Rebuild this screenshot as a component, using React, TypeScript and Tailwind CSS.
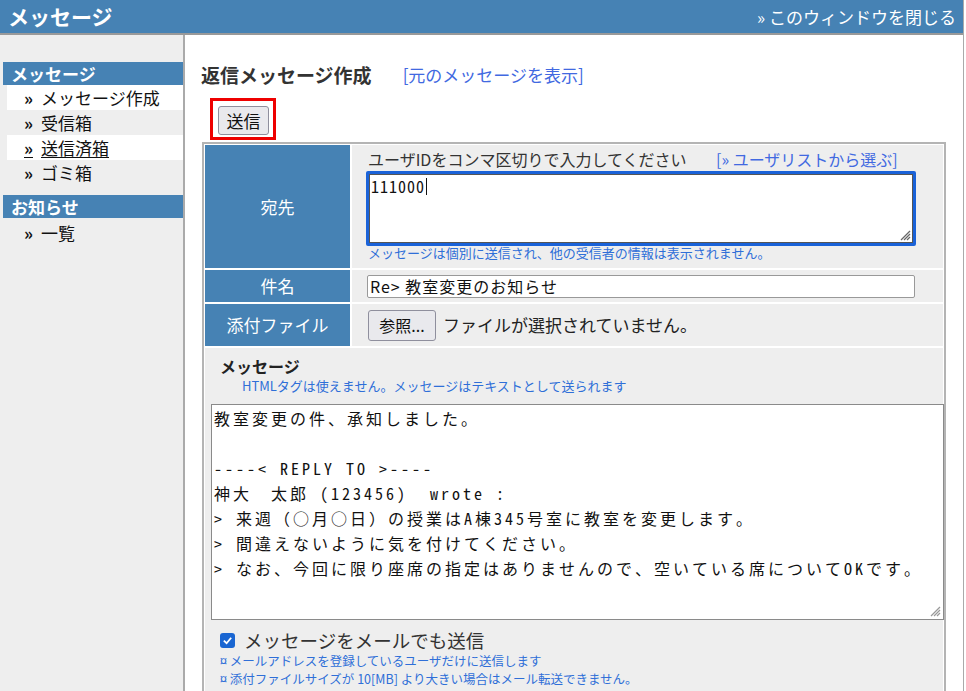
import React from 'react';

const messageLines = [
  '教室変更の件、承知しました。',
  '',
  '----< REPLY TO >----',
  '神大　太郎 (123456)  wrote :',
  '> 来週（○月○日）の授業はA棟345号室に教室を変更します。',
  '> 間違えないように気を付けてください。',
  '> なお、今回に限り座席の指定はありませんので、空いている席についてOKです。',
];

function Grip({ dark }: { dark?: boolean }) {
  return (
    <svg
      className="absolute right-[2px] bottom-[2px]"
      width="12"
      height="12"
      viewBox="0 0 12 12"
    >
      <g stroke={dark ? '#666' : '#999'} strokeWidth="1.2">
        <line x1="11" y1="2" x2="2" y2="11" />
        <line x1="11" y1="5" x2="5" y2="11" />
        <line x1="11" y1="8" x2="8" y2="11" />
      </g>
    </svg>
  );
}

function SideHeader({ children }: { children: React.ReactNode }) {
  return (
    <div className="ml-[3px] h-[23px] bg-[#4682b4] pl-[8px] text-[17px] font-bold leading-[23px] text-white">
      {children}
    </div>
  );
}

function SideItem({
  children,
  active,
  underline,
}: {
  children: React.ReactNode;
  active?: boolean;
  underline?: boolean;
}) {
  return (
    <div
      className={
        'ml-[7px] h-[25px] pl-[17px] text-[17px] leading-[25px] text-[#111] ' +
        (active ? 'bg-white' : '')
      }
    >
      <span className={underline ? 'underline underline-offset-2' : ''}>
        <span className="font-bold">»</span>
        <span className="ml-[8px]">{children}</span>
      </span>
    </div>
  );
}

export default function App() {
  return (
    <div className="h-[691px] w-[966px] overflow-hidden bg-white font-['Noto_Sans_CJK_JP',sans-serif] text-[#222]">
      <div className="flex h-full w-[964px] flex-col border-r border-[#aaa]">
        {/* Header */}
        <header className="flex h-[35px] shrink-0 items-center justify-between border-b-2 border-[#999] bg-[#4682b4] pl-[8px] pr-[7px]">
          <h1 className="text-[21px] font-bold leading-none text-white">メッセージ</h1>
          <span className="text-[17px] leading-none text-white">» このウィンドウを閉じる</span>
        </header>

        <div className="flex min-h-0 flex-1">
          {/* Sidebar */}
          <aside className="w-[185px] shrink-0 border-r-2 border-[#aaa] bg-[#eee] pt-[27px]">
            <SideHeader>メッセージ</SideHeader>
            <SideItem active>メッセージ作成</SideItem>
            <SideItem>受信箱</SideItem>
            <SideItem active underline>
              送信済箱
            </SideItem>
            <SideItem>ゴミ箱</SideItem>
            <div className="h-[10px]" />
            <SideHeader>お知らせ</SideHeader>
            <div className="h-[2px]" />
            <SideItem>一覧</SideItem>
          </aside>

          {/* Main */}
          <main className="flex-1 pl-[16px] pt-[28px]">
            <div className="flex items-center">
              <h2 className="text-[19px] font-bold leading-[24px] text-[#333]">返信メッセージ作成</h2>
              <span className="ml-[31px] text-[17px] leading-[24px] text-[#4169e1]">[元のメッセージを表示]</span>
            </div>

            <div className="ml-[9px] mt-[11px] h-[42px] w-[66px] border-[3px] border-[#ee0000] pl-[5px] pt-[5px]">
              <button className="flex h-[29px] w-[51px] items-center justify-center rounded-[3px] border border-[#8f8f9d] bg-[#e9e9ed] text-[17px] leading-none text-[#111]">
                送信
              </button>
            </div>

            {/* Form table */}
            <div className="ml-[1px] mt-[2px] w-[744px] border-2 border-[#b4b4b4] bg-white p-px">
              <div className="grid grid-cols-[145px_1fr] gap-[2px]">
                {/* 宛先 */}
                <div className="flex h-[123px] items-center justify-center bg-[#4682b4] text-[17px] text-white">宛先</div>
                <div className="bg-[#eee] pl-[14px] pt-[4px]">
                  <div className="flex pl-[2px] text-[16px] leading-[20px] text-[#333]">
                    <span className="w-[348px]">ユーザIDをコンマ区切りで入力してください</span>
                    <span className="text-[#4169e1]">[» ユーザリストから選ぶ]</span>
                  </div>
                  <div className="relative mt-[2px] h-[75px] w-[550px] rounded-[2px] border-[3px] border-[#1a62d8] bg-white shadow-[inset_0_0_0_1px_#555]">
                    <div className="flex items-center pl-[2px] pt-[2px] font-['Noto_Sans_Mono_CJK_JP','Noto_Sans_CJK_JP',monospace] text-[16px] leading-[20px] tracking-[1px] text-[#111]">
                      111000
                      <span className="ml-px inline-block h-[17px] w-px bg-[#111]" />
                    </div>
                    <Grip dark />
                  </div>
                  <div className="-mt-[1px] pl-[2px] text-[13px] leading-[16px] text-[#2f6fd8]">
                    メッセージは個別に送信され、他の受信者の情報は表示されません。
                  </div>
                </div>

                {/* 件名 */}
                <div className="flex h-[32px] items-center justify-center bg-[#4682b4] text-[17px] text-white">件名</div>
                <div className="flex items-center bg-[#eee] pl-[15px]">
                  <div className="flex h-[23px] w-[548px] items-center rounded-[2px] border border-[#999] bg-white pl-[2px] text-[16px] tracking-[1px] text-[#111]">
                    Re&gt; 教室変更のお知らせ
                  </div>
                </div>

                {/* 添付ファイル */}
                <div className="flex h-[42px] items-center justify-center bg-[#4682b4] text-[17px] text-white">添付ファイル</div>
                <div className="flex items-center bg-[#eee] pl-[16px]">
                  <button className="flex h-[31px] w-[68px] items-center justify-center rounded-[3px] border border-[#8f8f9d] bg-[#e9e9ed] text-[16px] leading-none text-[#111]">
                    参照...
                  </button>
                  <span className="ml-[7px] text-[17px] text-[#222]">ファイルが選択されていません。</span>
                </div>

                {/* メッセージ */}
                <div className="col-span-2 h-[400px] bg-[#eee] pt-[7px]">
                  <div className="pl-[15px] text-[16px] font-bold leading-[22px] text-[#222]">メッセージ</div>
                  <div className="pl-[37px] text-[13px] leading-[17px] text-[#2f6fd8]">
                    HTMLタグは使えません。メッセージはテキストとして送られます
                  </div>
                  <div className="relative ml-[6px] mt-[10px] h-[216px] w-[733px] border border-[#8a8a8a] bg-white pl-[2px] pt-[1px] font-['Noto_Sans_Mono_CJK_JP','Noto_Sans_CJK_JP',monospace] text-[16px] leading-[25px] tracking-[3px] text-[#111]">
                    {messageLines.map((line, i) => (
                      <div key={i} className="h-[25px] whitespace-pre">
                        {line}
                      </div>
                    ))}
                    <Grip />
                  </div>
                  <div className="mt-[8px] flex h-[24px] items-center pl-[15px]">
                    <div className="flex h-[15px] w-[15px] items-center justify-center rounded-[3px] bg-[#1a66d2]">
                      <svg width="11" height="11" viewBox="0 0 12 12">
                        <path d="M2 6.2 L5 9 L10 3" fill="none" stroke="white" strokeWidth="2" />
                      </svg>
                    </div>
                    <span className="ml-[9px] text-[18.5px] leading-[24px] text-[#333]">メッセージをメールでも送信</span>
                  </div>
                  <div className="h-[18px] pl-[15px] text-[12.5px] leading-[18px] text-[#2f6fd8]">
                    ¤ メールアドレスを登録しているユーザだけに送信します
                  </div>
                  <div className="h-[18px] pl-[15px] text-[12.5px] leading-[18px] text-[#2f6fd8]">
                    ¤ 添付ファイルサイズが 10[MB] より大きい場合はメール転送できません。
                  </div>
                </div>
              </div>
            </div>
          </main>
        </div>
      </div>
    </div>
  );
}
